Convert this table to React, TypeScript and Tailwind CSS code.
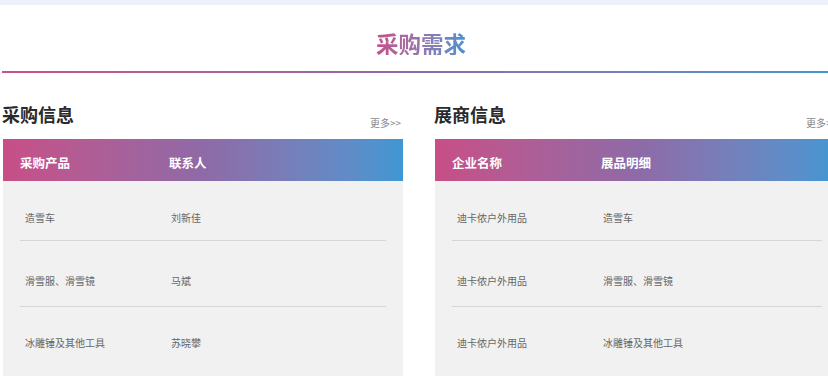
const FONT = "font-['Noto_Sans_CJK_SC','Noto_Sans',sans-serif]";

const purchases = [
  { a: "造雪车", b: "刘新佳", row: "h-[60px] pt-[32px] border-b border-[#d6d6d6]" },
  { a: "滑雪服、滑雪镜", b: "马斌", row: "h-[66px] pt-[35px] border-b border-[#d6d6d6]" },
  { a: "冰雕锤及其他工具", b: "苏晓攀", row: "h-[69px] pt-[31px]" },
];

const exhibitors = [
  { a: "迪卡侬户外用品", b: "造雪车", row: "h-[60px] pt-[32px] border-b border-[#d6d6d6]" },
  { a: "迪卡侬户外用品", b: "滑雪服、滑雪镜", row: "h-[66px] pt-[35px] border-b border-[#d6d6d6]" },
  { a: "迪卡侬户外用品", b: "冰雕锤及其他工具", row: "h-[69px] pt-[31px]" },
];

interface PanelProps {
  title: string;
  cols: [string, string];
  rows: { a: string; b: string; row: string }[];
  width: string;
}

function Panel({ title, cols, rows, width }: PanelProps) {
  return (
    <div className={`${width} shrink-0`}>
      {/* heading */}
      <div className="flex items-start justify-between h-[34px] pr-[2px]">
        <h3 className="text-[18px] leading-none font-bold text-[#2a2a2a] -ml-[1px]">{title}</h3>
        <a className="mt-[13px] text-[10px] leading-none text-[#888]">更多&gt;&gt;</a>
      </div>

      {/* table header */}
      <div className="h-[42px] flex items-center pt-[8px] pl-[17px] bg-gradient-to-r from-[#c84e87] via-[#8e6aa7] to-[#3e97d3] text-white text-[12.5px] font-bold leading-none">
        <span className="w-[149px]">{cols[0]}</span>
        <span>{cols[1]}</span>
      </div>

      {/* table body */}
      <div className="bg-[#f1f1f1] h-[195px]">
        {rows.map((r, i) => (
          <div key={i} className={`mx-[17px] flex text-[10px] leading-none text-[#666] ${r.row}`}>
            <span className="w-[151px] pl-[5px]">{r.a}</span>
            <span>{r.b}</span>
          </div>
        ))}
      </div>
    </div>
  );
}

export default function App() {
  return (
    <div className={`w-[828px] h-[380px] overflow-hidden bg-white ${FONT}`}>
      {/* top strip */}
      <div className="h-[5px] bg-[#eef1f9]"></div>

      {/* ── SECTION TITLE ── */}
      <div className="mt-[27px] flex justify-center pl-[14px]">
        <h2 className="text-[22.5px] leading-none font-bold bg-gradient-to-r from-[#c44f89] to-[#4390d2] bg-clip-text text-transparent">
          采购需求
        </h2>
      </div>
      <div className="mt-[16px] ml-[2px] w-[840px] h-[2px] bg-gradient-to-r from-[#cc5086] via-[#8b6ba9] to-[#3f97d3]"></div>

      {/* ── PANELS ── */}
      <div className="mt-[32px] pl-[3px] flex gap-[32px] w-[900px]">
        <Panel title="采购信息" cols={["采购产品", "联系人"]} rows={purchases} width="w-[400px]" />
        <Panel title="展商信息" cols={["企业名称", "展品明细"]} rows={exhibitors} width="w-[404px]" />
      </div>
    </div>
  );
}
